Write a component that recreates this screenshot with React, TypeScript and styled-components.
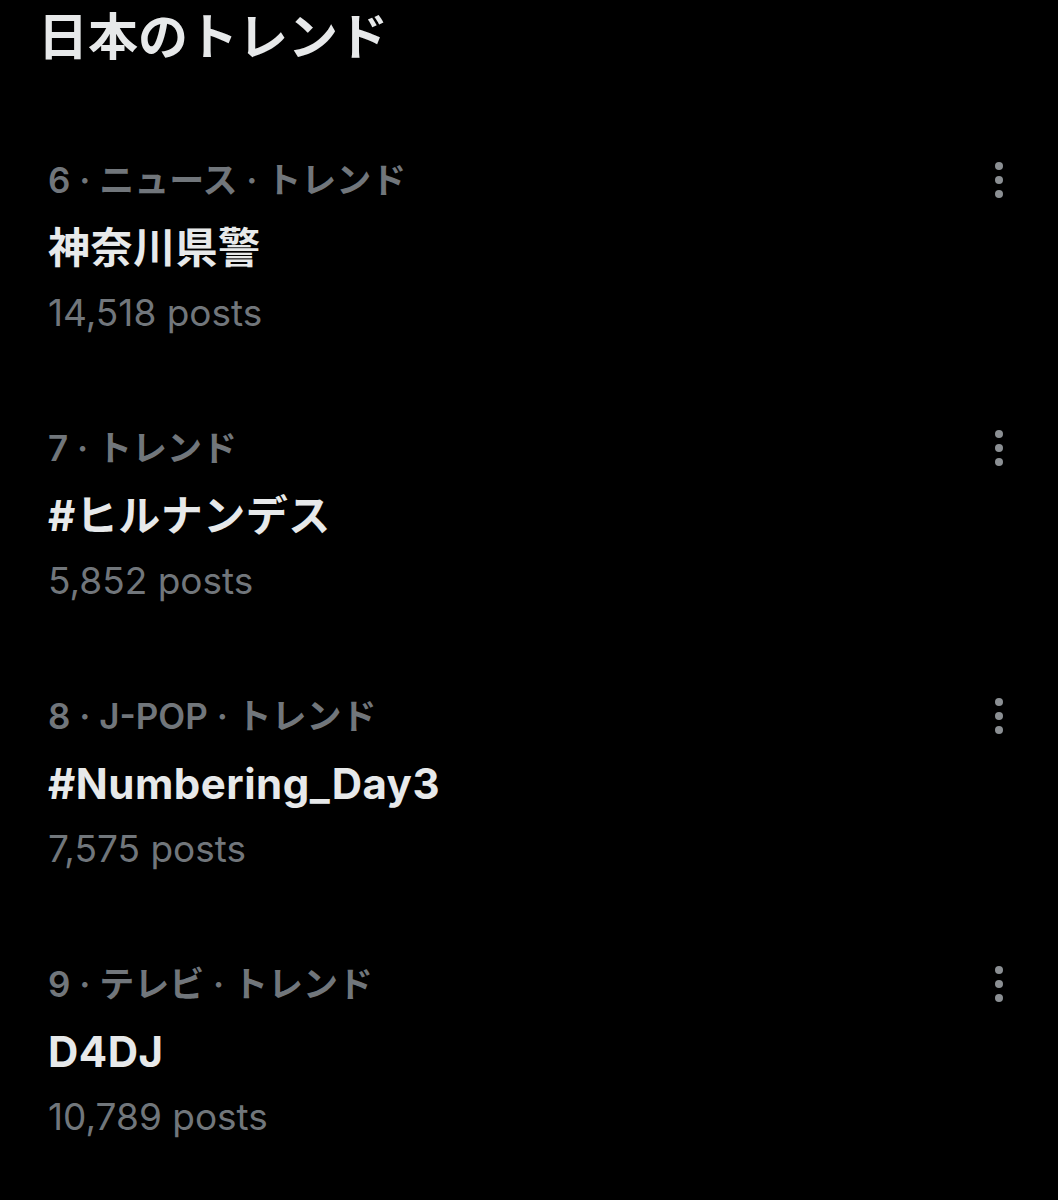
import styled, { createGlobalStyle } from 'styled-components';

interface Trend {
  rank: number;
  category: string[];
  name: string;
  posts: string;
}

const TRENDS: Trend[] = [
  { rank: 6, category: ['ニュース', 'トレンド'], name: '神奈川県警', posts: '14,518' },
  { rank: 7, category: ['トレンド'], name: '#ヒルナンデス', posts: '5,852' },
  { rank: 8, category: ['J-POP', 'トレンド'], name: '#Numbering_Day3', posts: '7,575' },
  { rank: 9, category: ['テレビ', 'トレンド'], name: 'D4DJ', posts: '10,789' },
];

const GlobalStyle = createGlobalStyle`
  html, body {
    margin: 0;
    padding: 0;
    background: #000;
  }
  body {
    font-family: Inter, "Noto Sans CJK JP", sans-serif;
    color: #e7e9ea;
  }
`;

const MoreIcon = () => (
  <svg width="10" height="38" viewBox="0 0 10 38" fill="#8b8f93">
    <circle cx="5" cy="5" r="4" />
    <circle cx="5" cy="19" r="4" />
    <circle cx="5" cy="33" r="4" />
  </svg>
);

const App = () => {
  return (
    <>
      <GlobalStyle />
      <Page>
        <Heading>日本のトレンド</Heading>
        <List>
          {TRENDS.map((trend) => (
            <Item key={trend.rank}>
              <MetaRow>
                <Meta>
                  {[String(trend.rank), ...trend.category].join(' · ')}
                </Meta>
                <More>
                  <MoreIcon />
                </More>
              </MetaRow>
              <Name>{trend.name}</Name>
              <Posts>{trend.posts} posts</Posts>
            </Item>
          ))}
        </List>
      </Page>
    </>
  );
};

export default App;

const Page = styled.div`
  width: 1058px;
  height: 1200px;
  overflow: hidden;
  background: #000;
`;

const Heading = styled.h1`
  margin: 0;
  padding-left: 38px;
  font-size: 50px;
  line-height: 74px;
  font-weight: 600;
  color: #e7e9ea;
`;

const List = styled.div`
  display: flex;
  flex-direction: column;
  gap: 90px;
  padding: 82px 54px 0 48px;
`;

const Item = styled.div`
  display: flex;
  flex-direction: column;
`;

const MetaRow = styled.div`
  display: flex;
  align-items: center;
  justify-content: space-between;
  height: 48px;
`;

const Meta = styled.span`
  font-size: 35px;
  line-height: 48px;
  font-weight: 600;
  color: #71767b;
`;

const More = styled.div`
  display: flex;
  align-items: center;
`;

const Name = styled.div`
  font-size: 42px;
  line-height: 88px;
  font-weight: 700;
  color: #e7e9ea;
  letter-spacing: 0.5px;
`;

const Posts = styled.div`
  font-size: 37px;
  line-height: 42px;
  font-weight: 400;
  color: #71767b;
`;
